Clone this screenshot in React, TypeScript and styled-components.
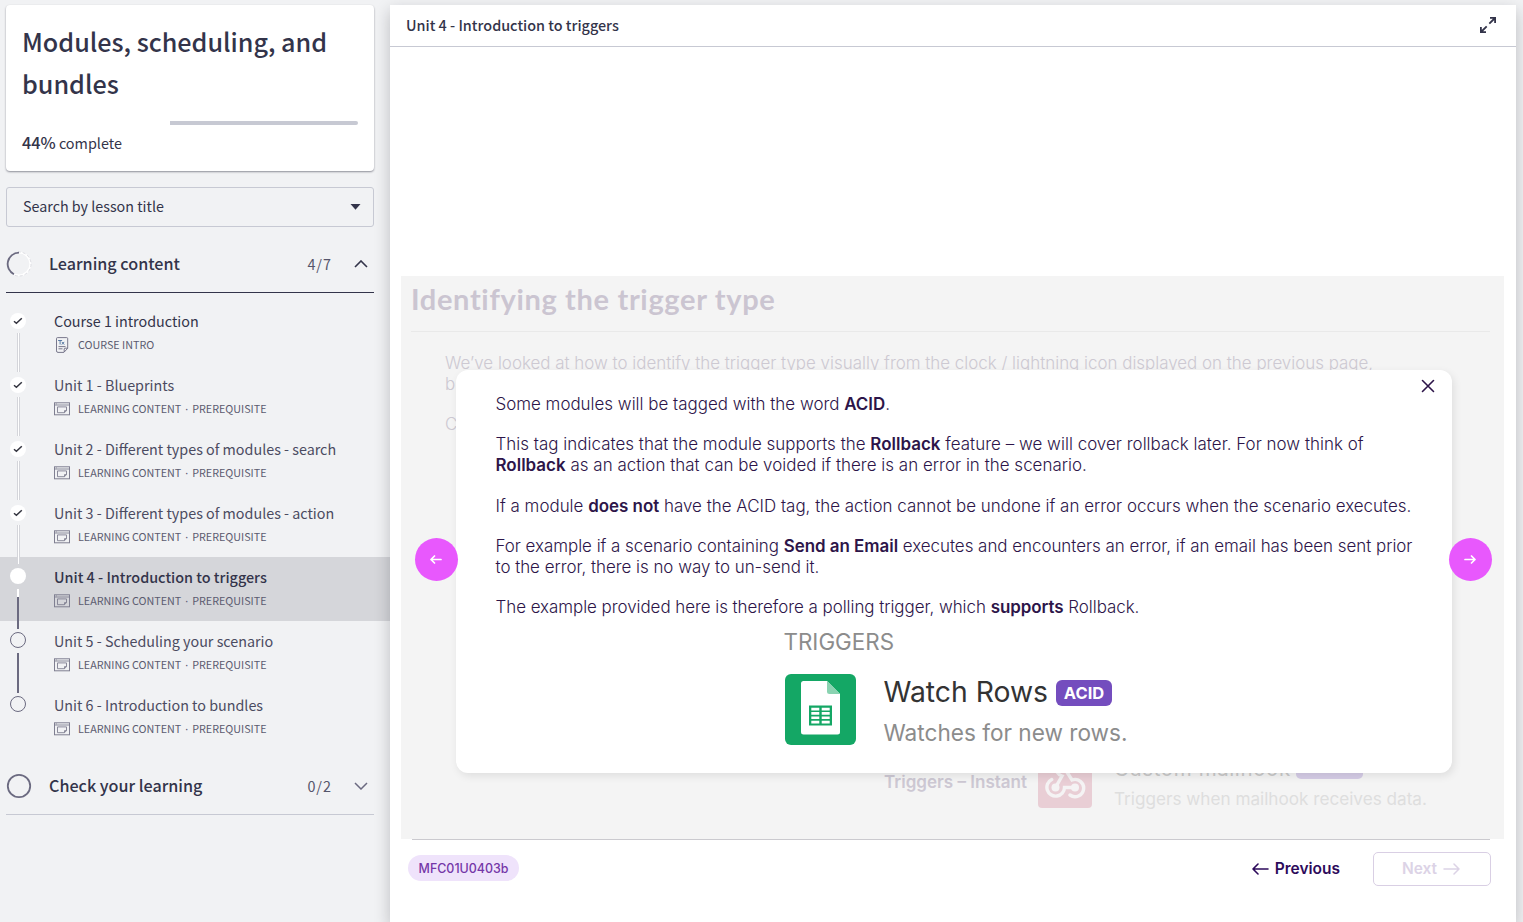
import React from "react";
import styled, { createGlobalStyle } from "styled-components";

const sans = `"Noto Sans CJK SC", "Noto Sans", sans-serif`;
const inter = `Inter, "Liberation Sans", sans-serif`;
const navy = "#33344a";
const slate = "#6b6a80";
const line = "#c7c9d3";
const plum = "#2d1549";

const GlobalStyle = createGlobalStyle`
  * { box-sizing: border-box; }
  body { margin: 0; background: #f1f2f4; overflow: hidden; }
  svg { display: block; flex: none; }
  p, h1, h2, h3 { margin: 0; }
`;

const Page = styled.div`
  display: flex;
  width: 1523px;
  height: 922px;
  overflow: hidden;
  background: #f1f2f4;
  color: ${navy};
  font-family: ${sans};
`;

/* ---------- Sidebar ---------- */

const Sidebar = styled.aside`
  width: 390px;
  flex: none;
  padding-top: 5px;
`;

const CourseCard = styled.section`
  height: 166px;
  margin: 0 16px 16px 6px;
  padding: 15px 16px 0;
  border-radius: 4px;
  background: #fff;
  box-shadow: 0 1px 2px rgba(20, 22, 40, 0.45);
`;

const CourseTitle = styled.h1`
  margin: 0 -10px 17px 0;
  font-size: 25.15px;
  font-weight: 500;
  line-height: 42px;
`;

const Progress = styled.div`
  display: flex;
  height: 4px;
  padding-left: 148px;
`;

const ProgressRest = styled.div`
  flex: 1;
  border-radius: 0 2px 2px 0;
  background: ${line};
`;

const ProgressLabel = styled.p`
  margin-top: 5px;
  font-size: 14.4px;
  line-height: 24px;
  b { font-size: 16.2px; font-weight: 500; }
`;

const SearchBox = styled.div`
  display: flex;
  align-items: center;
  justify-content: space-between;
  height: 40px;
  margin: 0 16px 8px 6px;
  padding: 0 12px 0 16px;
  border: 1px solid ${line};
  border-radius: 3px;
  font-size: 14.31px;
  line-height: 36px;
`;

const SearchLabel = styled.span`
  padding-bottom: 2px;
`;

const SectionHead = styled.div<{ $open?: boolean }>`
  display: flex;
  align-items: center;
  height: 58px;
  margin: 0 16px 0 6px;
  border-bottom: 1px solid ${(p) => (p.$open ? navy : line)};
`;

const SectionTitle = styled.h2`
  flex: 1;
  margin-left: 17px;
  padding-bottom: 2px;
  font-size: 16.15px;
  font-weight: 500;
  line-height: 26px;
`;

const SectionCount = styled.span`
  margin-right: 22px;
  color: #55556b;
  font-size: 14.4px;
  line-height: 24px;
  letter-spacing: 1px;
`;

const Chevron = styled.svg`
  margin-right: 6px;
`;

const Lessons = styled.div`
  padding: 8px 0;
`;

const LessonRow = styled.div<{ $active?: boolean }>`
  display: flex;
  height: 64px;
  background: ${(p) => (p.$active ? "#d5d6da" : "transparent")};
`;

const Marker = styled.div<{ $done: boolean }>`
  display: flex;
  flex-direction: column;
  align-items: center;
  width: 16px;
  margin: ${(p) => (p.$done ? 12 : 11)}px 28px 0 10px;
`;

const Dot = styled.div<{ $open?: boolean }>`
  display: flex;
  align-items: center;
  justify-content: center;
  flex: none;
  width: 16px;
  height: 16px;
  border: ${(p) => (p.$open ? `1px solid ${slate}` : "none")};
  border-radius: 50%;
  background: ${(p) => (p.$open ? "transparent" : "#fff")};
`;

const lineLook = {
  done: `background: #fff; border: solid #d4d5da; border-width: 0 1px;`,
  current: `background: linear-gradient(#fff 8px, ${slate} 8px);`,
  todo: `background: ${slate};`,
};

const Connector = styled.div<{ $kind: keyof typeof lineLook }>`
  position: relative;
  flex: none;
  width: ${(p) => (p.$kind === "done" ? 3 : 2)}px;
  height: ${(p) => (p.$kind === "done" ? 39 : 40)}px;
  margin-top: ${(p) => (p.$kind === "done" ? 4 : 5)}px;
  ${(p) => lineLook[p.$kind]}
`;

const LessonText = styled.div`
  padding-top: 8px;
`;

const LessonTitle = styled.h3<{ $active?: boolean; $dark?: boolean }>`
  color: ${(p) => (p.$active || p.$dark ? navy : "#4b4b61")};
  font-size: ${(p) => (p.$active ? 14.4 : 14.33)}px;
  font-weight: ${(p) => (p.$active ? 500 : 400)};
  line-height: 24px;
  white-space: nowrap;
`;

const LessonMeta = styled.div`
  display: flex;
  align-items: center;
  gap: 8px;
  height: 24px;
  color: #5b5b70;
  font-size: 10.75px;
  line-height: 24px;
  white-space: pre;
  i { font-family: "Noto Sans"; font-style: normal; margin: 0 1.6px; }
`;

/* ---------- Lesson panel ---------- */

const Panel = styled.main`
  position: relative;
  display: flex;
  flex-direction: column;
  width: 1126px;
  height: 917px;
  margin-top: 5px;
  background: #fff;
  box-shadow: 0 6px 15px rgba(20, 22, 30, 0.24);
`;

const PanelHead = styled.header`
  display: flex;
  align-items: center;
  justify-content: space-between;
  flex: none;
  height: 42px;
  padding: 0 19px 2px 16px;
  border-bottom: 1px solid ${line};
  font-size: 14.4px;
  font-weight: 500;
  line-height: 24px;
`;

const Slide = styled.section`
  position: relative;
  height: 563px;
  margin: 229px 12px 0 11px;
  padding: 0 14px 0 10px;
  background: #f4f4f4;
  font-family: ${inter};
`;

const SlideTitle = styled.h2`
  height: 56px;
  border-bottom: 1px solid #e9e9e9;
  color: #cbc5d1;
  font: 700 29px/45px Lato, sans-serif;
  letter-spacing: 0.66px;
`;

const FadedCopy = styled.div`
  height: 422px;
  padding: 21px 0 0 34px;
  overflow: hidden;
  color: #cdc9d2;
  font-weight: 300;
  font-size: 16.93px;
  line-height: 21px;
  white-space: nowrap;
  p + p { margin-top: 19px; }
`;

const FadedTrigger = styled.div`
  display: flex;
  height: 54px;
  padding-left: 473px;
`;

const FadedLabel = styled.div`
  width: 154px;
  padding-top: 17px;
  color: #cdc8d3;
  font-size: 17.05px;
  font-weight: 600;
  line-height: 21px;
`;

const FadedDetail = styled.div`
  margin-left: 22px;
  color: #dedede;
  font-size: 17.15px;
  line-height: 26px;
  white-space: nowrap;
`;

const FadedName = styled.div`
  display: flex;
  align-items: center;
  gap: 5px;
  height: 32px;
  margin-top: -1px;
  margin-bottom: 1px;
  color: #c9c9c9;
  font-size: 20.5px;
  letter-spacing: 0.6px;
`;

const FadedTag = styled.span`
  width: 67px;
  height: 20px;
  border-radius: 5px;
  background: #d5cce6;
  color: #f4f4f4;
  font-size: 12px;
  font-weight: 700;
  line-height: 19px;
  text-align: center;
`;

const Modal = styled.div`
  position: absolute;
  top: 94px;
  left: 55px;
  width: 996px;
  height: 403px;
  padding: 24px 0 0 39.5px;
  border-radius: 12px;
  background: #fff;
  box-shadow: 2px 3px 8px rgba(0, 0, 0, 0.09);
  color: ${plum};
  font-size: 16.95px;
  font-weight: 300;
  line-height: 21px;
  white-space: nowrap;
  b { font-weight: 600; }
`;

const Paragraph = styled.p<{ $tracking?: number }>`
  margin-bottom: 19.3px;
  letter-spacing: ${(p) => p.$tracking ?? 0}px;
`;

const CloseButton = styled.svg`
  position: absolute;
  top: 9px;
  right: 17px;
`;

const ArrowButton = styled.div<{ $side: "left" | "right" }>`
  position: absolute;
  top: 262px;
  ${(p) => (p.$side === "left" ? "left: 14px" : "right: 12px")};
  display: flex;
  align-items: center;
  justify-content: center;
  width: 43px;
  height: 43px;
  padding: 0 2px 1px 0;
  border-radius: 50%;
  background: #e858fd;
`;

const Example = styled.div`
  display: grid;
  grid-template-columns: 71px auto;
  column-gap: 28px;
  width: 400px;
  margin: -8px 0 0 289px;
  font-weight: 400;
`;

const ExampleHead = styled.div`
  grid-column: 1 / -1;
  height: 45px;
  margin-left: -1px;
  color: #8c8c8c;
  font-size: 22.4px;
  line-height: 25px;
`;

const ExampleTitle = styled.div`
  display: flex;
  align-items: center;
  gap: 8px;
  height: 36px;
  margin-bottom: 8px;
  color: #333;
  font-size: 28.3px;
  line-height: 36px;
`;

const AcidTag = styled.span`
  width: 56px;
  height: 26px;
  margin-top: 2px;
  border-radius: 6px;
  background: #744dbe;
  color: #fff;
  font-size: 16.5px;
  font-weight: 700;
  line-height: 26px;
  text-align: center;
`;

const ExampleText = styled.div`
  color: #8c8c8c;
  font-size: 22.6px;
  line-height: 29px;
`;

const SlideFooter = styled.footer`
  display: flex;
  align-items: center;
  height: 58px;
  margin: 0 26px 0 22px;
  border-top: 1px solid #cbcacf;
  font-family: ${inter};
`;

const Code = styled.span`
  width: 111px;
  height: 26px;
  margin: 0 0 2px -4px;
  border-radius: 13px;
  background: #efe3fb;
  color: #7537a8;
  font-size: 12.45px;
  font-weight: 500;
  line-height: 27px;
  text-align: center;
`;

const Previous = styled.span`
  display: flex;
  align-items: center;
  gap: 6px;
  margin-left: auto;
  color: #2d0a5b;
  font-size: 15.5px;
  font-weight: 600;
  line-height: 20px;
`;

const Next = styled.span`
  display: flex;
  align-items: center;
  justify-content: center;
  gap: 6px;
  width: 118px;
  height: 34px;
  margin: 0 -1px 0 33px;
  padding-right: 2px;
  border: 1px solid #d9cfe4;
  border-radius: 5px;
  color: #dcd3e6;
  font-size: 15.5px;
  font-weight: 600;
  line-height: 20px;
`;

/* ---------- Icons ---------- */

const Check = () => (
  <svg width="10" height="8" viewBox="0 0 10 8" fill="none" stroke="#33343f" strokeWidth="1.5">
    <path d="M1 4.2 3.4 6.3 8.8 1.2" />
  </svg>
);

const TextPageIcon = () => (
  <svg width="16" height="16" viewBox="0 0 16 16" fill="none" stroke={slate} strokeWidth="0.9">
    <path d="M2.9.6h9.2a1 1 0 0 1 1 1v9.7l-3.8 4.1H3.4a1.5 1.5 0 0 1-1.5-1.5V1.6a1 1 0 0 1 1-1ZM9.6 15v-3a.8.8 0 0 1 .8-.8H13" transform="translate(.6 0)" />
    <path d="M4.1 3.500h4M6.100 3.500v4M7.800 4.900l2.400 2.700M10.200 4.900 7.800 7.600" stroke="#4b6f9c" />
    <path d="M4.500 9.600h7M4.500 11.800h4" />
  </svg>
);

const WindowIcon = () => (
  <svg width="16" height="14" viewBox="0 0 16 14" fill="none" stroke="#7f7f91" strokeWidth="1">
    <rect x=".5" y=".8" width="15" height="12" />
    <path d="M.5 3h15M1.800 1.900h1M12.500 8.500V4.900h-9v5.800h6.600M12.600 8.600h-2.100v2.100M12.600 8.600l-2.300 2.200" strokeWidth=".9" />
  </svg>
);

const Arrow = ({ w, h, color, flip, sw }: { w: number; h: number; color: string; flip?: boolean; sw: number }) => (
  <svg width={w} height={h} viewBox={`0 0 ${w} ${h}`} fill="none" stroke={color} strokeWidth={sw} strokeLinecap="round" strokeLinejoin="round">
    <path
      transform={flip ? `translate(${w} 0) scale(-1 1)` : undefined}
      d={`M${w - 1} ${h / 2}H1M${h / 2} 1 1 ${h / 2}l${h / 2 - 1} ${h / 2 - 1}`}
    />
  </svg>
);

const SheetsIcon = () => (
  <svg width="71" height="71" viewBox="0 0 71 71">
    <rect width="71" height="71" rx="6" fill="#14a765" />
    <path d="M18.5 7H42l13 13v38a2.5 2.5 0 0 1-2.5 2.5h-34A2.5 2.5 0 0 1 16 58V9.500A2.500 2.500 0 0 1 18.500 7Z" fill="#fff" />
    <path d="M42 7 55 20H44.500A2.500 2.500 0 0 1 42 17.500Z" fill="#8ad3b1" />
    <path d="M24 31.500h23V51.500H24Z" fill="#14a765" />
    <path d="M26.300 33.700h8v2.700h-8ZM36.700 33.700h8v2.700h-8ZM26.300 38.100h8v2.700h-8ZM36.700 38.100h8v2.700h-8ZM26.300 42.400h8v2.700h-8ZM36.700 42.400h8v2.700h-8ZM26.300 46.700h8v2.700h-8ZM36.700 46.700h8v2.700h-8Z" fill="#fff" />
  </svg>
);

const WebhookIcon = () => (
  <svg width="54" height="54" viewBox="0 0 54 54" fill="none" stroke="#f5f3f4" strokeWidth="3.4" strokeLinecap="round">
    <rect width="54" height="54" rx="4" fill="#e9ced5" stroke="none" />
    <circle cx="27" cy="15" r="4" fill="#f5f3f4" stroke="none" />
    <circle cx="17.500" cy="33.500" r="4" fill="#f5f3f4" stroke="none" />
    <circle cx="37" cy="33.500" r="4" fill="#f5f3f4" stroke="none" />
    <path d="M17.500 33.500 24 22a8.500 8.500 0 1 1 11-8M37 33.500H26.500a8.800 8.800 0 1 1-12.800-8M27 15l7 11a8.600 8.600 0 1 1-2 15" />
  </svg>
);

/* ---------- Content ---------- */

const lessons = [
  { title: "Course 1 introduction", state: "done", intro: true },
  { title: "Unit 1 - Blueprints", state: "done" },
  { title: "Unit 2 - Different types of modules - search", state: "done" },
  { title: "Unit 3 - Different types of modules - action", state: "done" },
  { title: "Unit 4 - Introduction to triggers", state: "current" },
  { title: "Unit 5 - Scheduling your scenario", state: "todo" },
  { title: "Unit 6 - Introduction to bundles", state: "todo" },
] as { title: string; state: keyof typeof lineLook; intro?: boolean }[];

export default function App() {
  return (
    <Page>
      <GlobalStyle />
      <Sidebar>
        <CourseCard>
          <CourseTitle>Modules, scheduling, and<br />bundles</CourseTitle>
          <Progress><ProgressRest /></Progress>
          <ProgressLabel><b>44%</b> complete</ProgressLabel>
        </CourseCard>
        <SearchBox>
          <SearchLabel>Search by lesson title</SearchLabel>
          <svg width="11" height="6" viewBox="0 0 11 6" fill={navy}><path d="M.500 0h10L5.500 5.700Z" /></svg>
        </SearchBox>
        <SectionHead $open>
          <svg width="26" height="26" viewBox="0 0 26 26" fill="none">
            <circle cx="13" cy="13" r="11.300" stroke="#fff" strokeWidth="1.800" />
            <circle cx="13" cy="13" r="12" stroke="#c9cad2" strokeWidth=".6" strokeDasharray="3 2" />
            <path d="M13 1.600A11.400 11.400 0 0 0 8 23.200" stroke={slate} strokeWidth="1.800" />
          </svg>
          <SectionTitle>Learning content</SectionTitle>
          <SectionCount>4/7</SectionCount>
          <Chevron width="14" height="8" viewBox="0 0 14 8" fill="none" stroke={navy} strokeWidth="1.600"><path d="M1 7 7 1l6 6" /></Chevron>
        </SectionHead>
        <Lessons>
          {lessons.map((l, i) => (
            <LessonRow key={l.title} $active={l.state === "current"}>
              <Marker $done={l.state === "done"}>
                <Dot $open={l.state === "todo"}>{l.state === "done" && <Check />}</Dot>
                {i < lessons.length - 1 && <Connector $kind={l.state} />}
              </Marker>
              <LessonText>
                <LessonTitle $active={l.state === "current"} $dark={l.intro}>{l.title}</LessonTitle>
                <LessonMeta>
                  {l.intro ? <TextPageIcon /> : <WindowIcon />}
                  {l.intro ? <span>COURSE INTRO</span> : <span>LEARNING CONTENT <i>·</i> PREREQUISITE</span>}
                </LessonMeta>
              </LessonText>
            </LessonRow>
          ))}
        </Lessons>
        <SectionHead>
          <svg width="26" height="26" viewBox="0 0 26 26" fill="none"><circle cx="13" cy="13" r="11.200" stroke={slate} strokeWidth="1.800" /></svg>
          <SectionTitle>Check your learning</SectionTitle>
          <SectionCount>0/2</SectionCount>
          <Chevron width="14" height="8" viewBox="0 0 14 8" fill="none" stroke={slate} strokeWidth="1.500"><path d="m1 1 6 6 6-6" /></Chevron>
        </SectionHead>
      </Sidebar>

      <Panel>
        <PanelHead>
          Unit 4 - Introduction to triggers
          <svg width="18" height="18" viewBox="0 0 18 18" fill="none" stroke={navy} strokeWidth="1.800">
            <path d="M10.300 7.700 16 2M11 1.900H16.100V7M7.700 10.300 2 16M1.900 11V16.100H7" />
          </svg>
        </PanelHead>

        <Slide>
          <SlideTitle>Identifying the trigger type</SlideTitle>
          <FadedCopy>
            <p>
              We’ve looked at how to identify the trigger type visually from the clock / lightning icon displayed on the previous page,
              <br />b
            </p>
            <p>C</p>
          </FadedCopy>
          <FadedTrigger>
            <FadedLabel>Triggers – Instant</FadedLabel>
            <WebhookIcon />
            <FadedDetail>
              <FadedName>Custom mailhook <FadedTag>INSTANT</FadedTag></FadedName>
              Triggers when mailhook receives data.
            </FadedDetail>
          </FadedTrigger>

          <Modal>
            <CloseButton width="14" height="14" viewBox="0 0 14 14" fill="none" stroke={plum} strokeWidth="1.600" strokeLinecap="round">
              <path d="m1.500 1.500 11 11M12.500 1.500l-11 11" />
            </CloseButton>
            <Paragraph>Some modules will be tagged with the word <b>ACID</b>.</Paragraph>
            <Paragraph $tracking={0.025}>
              This tag indicates that the module supports the <b>Rollback</b> feature – we will cover rollback later. For now think of
              <br />
              <b>Rollback</b> as an action that can be voided if there is an error in the scenario.
            </Paragraph>
            <Paragraph>If a module <b>does not</b> have the ACID tag, the action cannot be undone if an error occurs when the scenario executes.</Paragraph>
            <Paragraph $tracking={-0.025}>
              For example if a scenario containing <b>Send an Email</b> executes and encounters an error, if an email has been sent prior
              <br />
              to the error, there is no way to un-send it.
            </Paragraph>
            <Paragraph $tracking={-0.04}>The example provided here is therefore a polling trigger, which <b>supports</b> Rollback.</Paragraph>
            <Example>
              <ExampleHead>TRIGGERS</ExampleHead>
              <SheetsIcon />
              <div>
                <ExampleTitle>Watch Rows <AcidTag>ACID</AcidTag></ExampleTitle>
                <ExampleText>Watches for new rows.</ExampleText>
              </div>
            </Example>
          </Modal>

          <ArrowButton $side="left"><Arrow w={12} h={9} color="#fff" sw={1.7} /></ArrowButton>
          <ArrowButton $side="right"><Arrow w={12} h={9} color="#fff" flip sw={1.7} /></ArrowButton>
        </Slide>

        <SlideFooter>
          <Code>MFC01U0403b</Code>
          <Previous><Arrow w={17} h={12} color="#2d0a5b" sw={1.6} />Previous</Previous>
          <Next>Next<Arrow w={17} h={12} color="#dcd3e6" flip sw={1.5} /></Next>
        </SlideFooter>
      </Panel>
    </Page>
  );
}
